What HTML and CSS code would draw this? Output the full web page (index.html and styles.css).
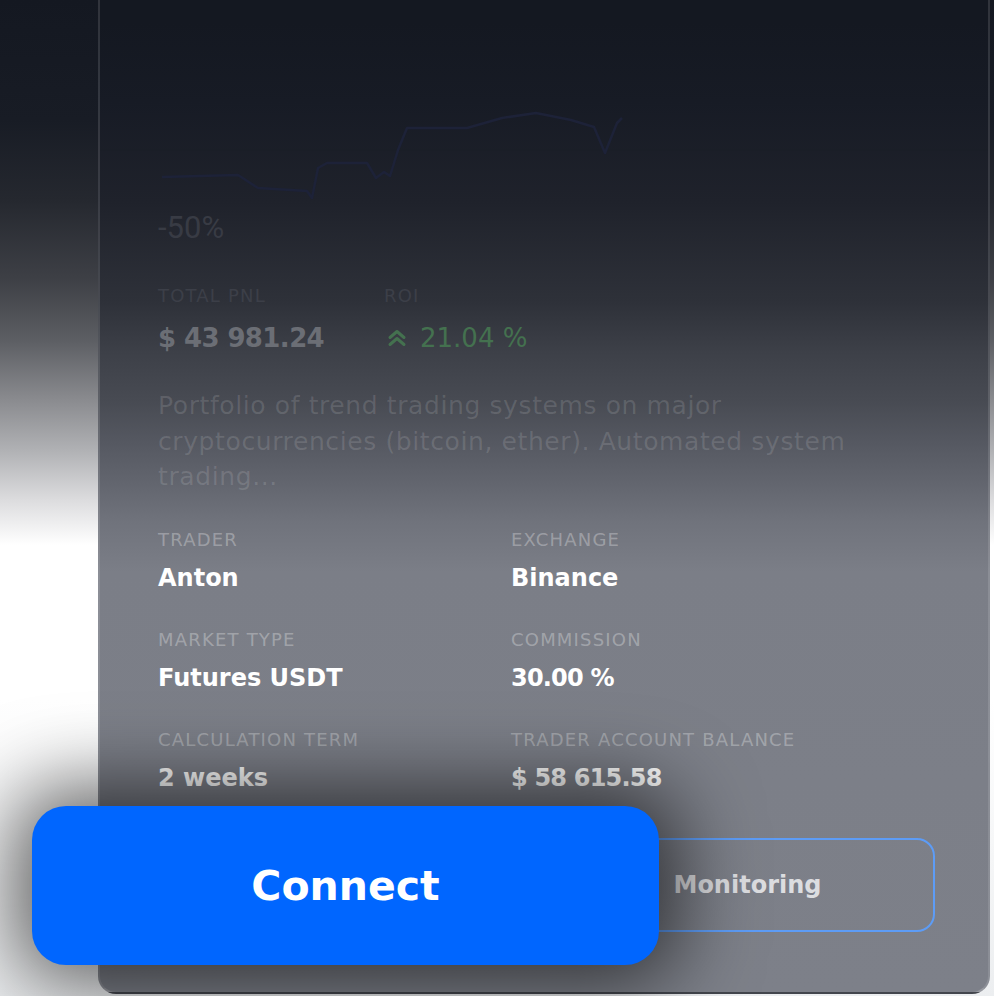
FILE: index.html
```html
<!DOCTYPE html>
<html lang="en">
<head>
    <meta charset="UTF-8">
    <meta name="viewport" content="width=device-width, initial-scale=1.0">
    <title>Strategy</title>
    <link rel="stylesheet" href="styles.css">
</head>
<body>
    <div class="page">
        <section class="card">
            <!-- PNL chart -->
            <svg class="chart" width="888" height="200" viewBox="100 2 888 200">
                <line x1="100" y1="150" x2="988" y2="150" class="grid-line" />
                <polyline class="chart-line" points="162,177 238,175 258,188 307,191 312,198 318,168 327,163 367,163 376,178 384,172 390,176 398,150 407,128 467,128 502,118 536,113 571,120 594,127 605,153 617,123 622,118" />
            </svg>
            <div class="axis">-50%</div>

            <div class="stats">
                <div class="stat pnl">
                    <div class="stat-label">Total PNL</div>
                    <div class="stat-value">$ 43 981.24</div>
                </div>
                <div class="stat">
                    <div class="stat-label">ROI</div>
                    <div class="stat-value roi">
                        <svg width="20" height="18" viewBox="0 0 20 18">
                            <path d="M3 8.5 L10 2.5 L17 8.5 M3 15.5 L10 9.5 L17 15.5" />
                        </svg>
                        21.04 %
                    </div>
                </div>
            </div>

            <p class="desc">Portfolio of trend trading systems on major cryptocurrencies (bitcoin, ether). Automated system trading...</p>

            <!-- trader details -->
            <div class="info">
                <div class="info-item">
                    <div class="info-label">Trader</div>
                    <div class="info-value">Anton</div>
                </div>
                <div class="info-item">
                    <div class="info-label">Exchange</div>
                    <div class="info-value">Binance</div>
                </div>
                <div class="info-item">
                    <div class="info-label">Market type</div>
                    <div class="info-value">Futures USDT</div>
                </div>
                <div class="info-item">
                    <div class="info-label">Commission</div>
                    <div class="info-value num">30.00 %</div>
                </div>
                <div class="info-item">
                    <div class="info-label">Calculation term</div>
                    <div class="info-value">2 weeks</div>
                </div>
                <div class="info-item">
                    <div class="info-label">Trader account balance</div>
                    <div class="info-value num">$ 58 615.58</div>
                </div>
            </div>

            <div class="actions">
                <button type="button" class="btn-outline">Monitoring</button>
            </div>
        </section>

        <!-- highlighted button, pops out of the card -->
        <button type="button" class="btn-connect">Connect</button>
    </div>
</body>
</html>
```

FILE: styles.css
```css
body {
    margin: 0;
    font-family: "DejaVu Sans", "Open Sans", sans-serif;
    background: #ffffff;
}

.page {
    position: relative;
    width: 994px;
    height: 996px;
    overflow: hidden;
    /* strip of page visible left of the card */
    background: linear-gradient(180deg,
        #141821 0, #181c25 120px, #25282f 200px, #3e4046 280px,
        #5c5e63 340px, #8a8b8f 400px, #b0b1b4 450px, #dcdcde 500px,
        #ffffff 545px, #ffffff 700px, #eceef0 100%);
}

.card {
    box-sizing: border-box;
    width: 892px;
    margin: -40px 0 0 98px;
    padding: 40px 53px 60px 58px;
    border: 2px solid rgba(255, 255, 255, 0.12);
    border-bottom-color: rgba(255, 255, 255, 0.2);
    border-radius: 18px;
    background: linear-gradient(180deg,
        #141821 0, #141821 60px, #171b25 140px, #1f222b 240px, #2e3139 340px,
        #3d4048 390px, #484b53 440px, #555861 480px, #62656e 520px,
        #70737c 560px, #7b7e87 610px, #7d8089 100%);
}

.chart {
    display: block;
    margin-left: -58px;
}

.grid-line {
    stroke: #1b1e27;
    stroke-width: 1;
}

.chart-line {
    fill: none;
    stroke: #1d2238;
    stroke-width: 2.5;
    stroke-linejoin: round;
}

.axis {
    margin-top: 8px;
    font-family: Roboto, sans-serif;
    font-size: 31px;
    line-height: 36px;
    color: #383b44;
}

.stats {
    display: flex;
    margin-top: 40px;
}

.stat.pnl {
    width: 226px;
}

.stat-label {
    font-size: 18px;
    line-height: 20px;
    letter-spacing: 1.2px;
    text-transform: uppercase;
    color: #3c3f48;
}

.stat-value {
    margin-top: 14px;
    font-size: 26px;
    font-weight: 700;
    line-height: 36px;
    letter-spacing: -0.6px;
    color: #6b6e75;
}

.stat-value.roi {
    display: flex;
    align-items: center;
    gap: 13px;
    font-weight: 400;
    letter-spacing: 0;
    color: #44714f;
}

.stat-value.roi svg {
    margin-left: 3px;
}

.stat-value.roi path {
    fill: none;
    stroke: #44714f;
    stroke-width: 3;
    stroke-linecap: round;
    stroke-linejoin: round;
}

.desc {
    max-width: 720px;
    margin: 32px 0 0;
    font-size: 25px;
    line-height: 35.5px;
    letter-spacing: 0.6px;
    color: rgba(255, 255, 255, 0.13);
}

.info {
    display: grid;
    grid-template-columns: 353px 1fr;
    row-gap: 37px;
    margin-top: 35px;
}

.info-label {
    font-size: 18px;
    line-height: 20px;
    letter-spacing: 1.2px;
    text-transform: uppercase;
    color: rgba(255, 255, 255, 0.3);
}

.info-value {
    margin-top: 13px;
    font-size: 24px;
    font-weight: 700;
    line-height: 30px;
    color: #ffffff;
}

.info-value.num {
    letter-spacing: -0.8px;
}

.actions {
    display: flex;
    justify-content: flex-end;
    margin-top: 45px;
}

.btn-outline {
    width: 375px;
    height: 94px;
    border: 2px solid #5d9cf6;
    border-radius: 18px;
    background: transparent;
    font-family: inherit;
    font-size: 24px;
    font-weight: 700;
    color: #dcdde0;
}

.btn-connect {
    position: absolute;
    left: 32px;
    top: 806px;
    width: 627px;
    height: 159px;
    border: none;
    border-radius: 34px;
    background: #0066ff;
    box-shadow: 0 0 80px 20px rgba(0, 0, 0, 0.6);
    font-family: inherit;
    font-size: 41px;
    font-weight: 700;
    color: #ffffff;
}
```
